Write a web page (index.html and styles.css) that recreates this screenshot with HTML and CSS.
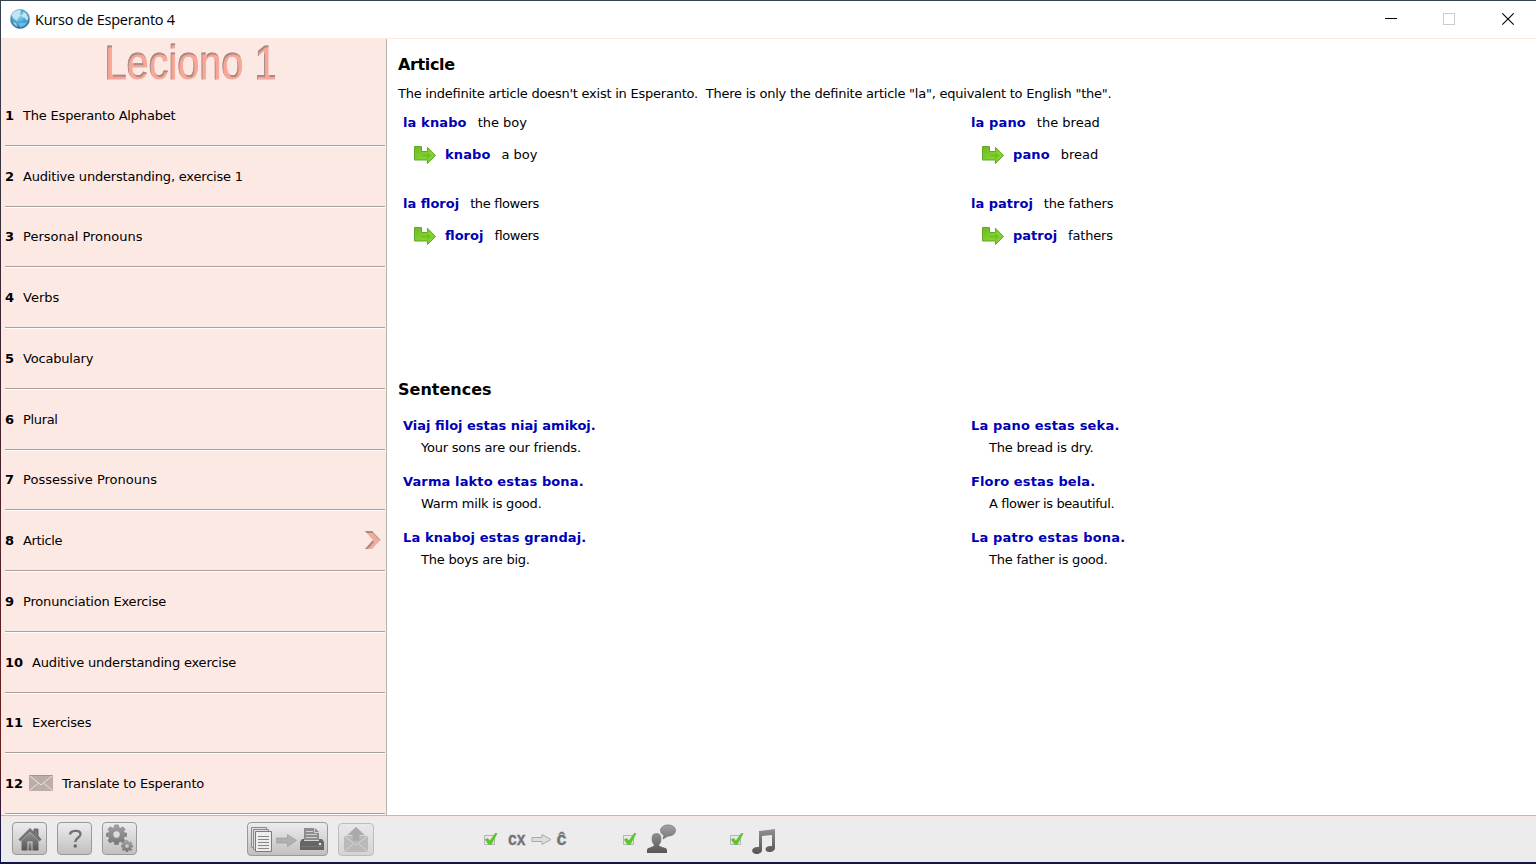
FILE: index.html
```
<!DOCTYPE html>
<html lang="en">
<head>
<meta charset="utf-8">
<title>Kurso de Esperanto 4</title>
<link rel="stylesheet" href="styles.css">
</head>
<body>
<svg class="defs" width="0" height="0">
  <defs>
    <linearGradient id="green" x1="0" y1="0" x2="1" y2="1"><stop offset="0" stop-color="#6cba22"/><stop offset=".55" stop-color="#84d230"/><stop offset="1" stop-color="#7ccb34"/></linearGradient>
    <linearGradient id="dark" x1="0" y1="0" x2="0" y2="1"><stop offset="0" stop-color="#909090"/><stop offset="1" stop-color="#555"/></linearGradient>
    <linearGradient id="mid" x1="0" y1="0" x2="0" y2="1"><stop offset="0" stop-color="#a2a2a2"/><stop offset="1" stop-color="#777"/></linearGradient>
    <radialGradient id="globe" cx=".45" cy=".35" r=".65"><stop offset="0" stop-color="#8ed5f3"/><stop offset=".6" stop-color="#43a0d2"/><stop offset="1" stop-color="#225c91"/></radialGradient>
    <filter id="inset" x="-5%" y="-5%" width="110%" height="110%">
      <feOffset in="SourceAlpha" dx=".6" dy="1.5" result="o"/>
      <feGaussianBlur in="o" stdDeviation=".6" result="b"/>
      <feComposite in="SourceAlpha" in2="b" operator="out" result="edge"/>
      <feFlood flood-color="#a08d89"/>
      <feComposite in2="edge" operator="in" result="shade"/>
      <feMerge><feMergeNode in="SourceGraphic"/><feMergeNode in="shade"/></feMerge>
    </filter>
    <symbol id="turn" viewBox="0 0 24 20">
      <path d="M1.500 1.500h7v5h6V2.300L22.500 10.500l-8 8V15h-13z" fill="url(#green)" stroke="#61a72a"/>
      <path d="M9 9.500h5V7l4 3.500-4 3.500v-2.500H9z" fill="#6cc31c"/>
    </symbol>
    <symbol id="check" viewBox="0 0 16 16">
      <path d="M1.500 4.500h10v9h-10z" fill="#e9e9e9" stroke="#b5b5b5"/>
      <path d="M1.800 8.500l3-1.500 2 2.500L12.200 2l2.300.3L8.500 13.800H5.500z" fill="#5fc42d"/>
    </symbol>
    <symbol id="gear" viewBox="-12 -12 24 24">
      <path fill-rule="evenodd" d="M-2-11h4l.6 3 2 .9 2.600-1.700 2.700 2.700-1.700 2.500.8 1.600 3 .6v3.300l-3 .6-.9 2.100 1.800 2.500-2.700 2.700-2.500-1.700-2.100.8-.6 2.900h-4l-.6-2.900-2.100-.8-2.500 1.700-2.700-2.700 1.700-2.500-.8-2.100-3-.6v-3.300l3-.6.8-1.600-1.700-2.500 2.700-2.700 2.600 1.700 2-.9zM4.200 0a4.200 4.200 0 1 0-8.400 0 4.200 4.200 0 1 0 8.400 0z" fill="url(#mid)" stroke="#777" stroke-width=".6"/>
    </symbol>
  </defs>
</svg>
<div class="window">
  <header class="titlebar">
    <svg class="app-icon" width="20" height="20" viewBox="0 0 20 20">
      <circle cx="10" cy="10" r="9.700" fill="url(#globe)" stroke="#7da1b8" stroke-width=".5"/>
      <path d="M1.500 6Q4 1 10 .8L11 3 9 5l2 1-3 3-1 3-4-3zM13 3l3 1 2.500 5-1.500 3-2-3-3-1-1-2 2-1z" fill="#cfe8f4" opacity=".9"/>
      <path d="M3 13l3 1 2 4Q4 17 3 13z" fill="#fff" opacity=".5"/>
      <path d="M8 14Q13 15 18 12Q15 18.500 10 18.500z" fill="#7fe0f8" opacity=".6"/>
    </svg>
    <h1 class="app-title">Kurso de Esperanto 4</h1>
    <svg class="win-controls" width="140" height="16" viewBox="0 0 140 16">
      <path d="M5 8.500h12" stroke="#000"/>
      <rect x="63.500" y="3.500" width="11" height="11" fill="none" stroke="#ccc"/>
      <path d="M122.300 3.300l11.400 11.400M133.700 3.300l-11.400 11.400" stroke="#000" stroke-width="1.100"/>
    </svg>
  </header>
  <main class="body">
    <nav class="sidebar">
      <svg class="lesson" width="384" height="47" viewBox="0 0 384 47">
        <text x="103.500" y="39.500" textLength="172" lengthAdjust="spacingAndGlyphs" filter="url(#inset)">Leciono 1</text>
      </svg>
      <ol class="topics">
        <li><b>1</b><span class="tight">The Esperanto Alphabet</span></li>
        <li><b>2</b><span class="tight">Auditive understanding, exercise 1</span></li>
        <li><b>3</b><span>Personal Pronouns</span></li>
        <li><b>4</b><span>Verbs</span></li>
        <li><b>5</b><span class="tight">Vocabulary</span></li>
        <li><b>6</b><span class="tighter">Plural</span></li>
        <li><b>7</b><span>Possessive Pronouns</span></li>
        <li><b>8</b><span class="tighter">Article</span>
          <svg class="current" width="16" height="18" viewBox="0 0 16 18"><path d="M0 0h7l8.500 9L7 18H0l8-9z" fill="#f3a99b" filter="url(#inset)"/></svg></li>
        <li><b>9</b><span class="tight">Pronunciation Exercise</span></li>
        <li><b>10</b><span class="tight">Auditive understanding exercise</span></li>
        <li><b>11</b><span class="tight">Exercises</span></li>
        <li><b>12</b><svg class="mail" width="24" height="16" viewBox="0 0 24 16"><rect width="24" height="16" rx="1" fill="#bcada7"/><path d="M.5.5h23" stroke="#a4948e"/><path d="M1 1l11 9L23 1M1 15l8.500-7M23 15l-8.500-7" fill="none" stroke="#eee1dc"/></svg><span class="tight">Translate to Esperanto</span></li>
      </ol>
    </nav>
    <article class="content">
      <section class="grammar">
        <h2 class="tighter">Article</h2>
        <p class="intro">The indefinite article doesn't exist in Esperanto.&nbsp; There is only the definite article "la", equivalent to English "the".</p>
        <div class="columns">
          <dl><dt class="wider">la knabo</dt><dd>the boy</dd></dl>
          <dl><dt class="wider">la pano</dt><dd>the bread</dd></dl>
          <dl class="derived"><svg width="24" height="20"><use href="#turn"/></svg><dt class="wider">knabo</dt><dd>a boy</dd></dl>
          <dl class="derived"><svg width="24" height="20"><use href="#turn"/></svg><dt class="wider">pano</dt><dd>bread</dd></dl>
          <dl><dt>la floroj</dt><dd class="tighter">the flowers</dd></dl>
          <dl><dt>la patroj</dt><dd class="tight">the fathers</dd></dl>
          <dl class="derived"><svg width="24" height="20"><use href="#turn"/></svg><dt>floroj</dt><dd class="tightest">flowers</dd></dl>
          <dl class="derived"><svg width="24" height="20"><use href="#turn"/></svg><dt>patroj</dt><dd class="tight">fathers</dd></dl>
        </div>
      </section>
      <section class="sentences">
        <h2>Sentences</h2>
        <div class="columns">
          <div class="pair"><b>Viaj filoj estas niaj amikoj.</b><p>Your sons are our friends.</p></div>
          <div class="pair"><b class="wide-text">La pano estas seka.</b><p>The bread is dry.</p></div>
          <div class="pair"><b class="wider">Varma lakto estas bona.</b><p>Warm milk is good.</p></div>
          <div class="pair"><b class="wider">Floro estas bela.</b><p class="tightest">A flower is beautiful.</p></div>
          <div class="pair"><b class="wider">La knaboj estas grandaj.</b><p>The boys are big.</p></div>
          <div class="pair"><b class="wide-text">La patro estas bona.</b><p>The father is good.</p></div>
        </div>
      </section>
    </article>
  </main>
  <footer class="toolbar">
    <div class="group buttons">
      <button class="btn" aria-label="Home"><svg width="24" height="24" viewBox="0 0 24 24">
        <path d="M1 12.500L12 1.500l4 4V2h4v7l3 3.500-1.500 1.200L12 4.500 2.500 13.700z" fill="#777" stroke="#555" stroke-width=".8"/>
        <path d="M3.500 13.500L12 5.500l8.500 8v10h-6v-9h-5v9h-6z" fill="url(#dark)"/><path d="M10.500 15.500h3v8h-3z" fill="url(#dark)"/></svg></button>
      <button class="btn" aria-label="Help"><svg width="24" height="24" viewBox="0 0 24 24">
        <path d="M7 7.500c.5-4.500 10-5 10.500-.5.400 3.500-5.300 4-5.300 8" fill="none" stroke="#707070" stroke-width="2.400"/><circle cx="12.200" cy="19" r="1.700" fill="#666"/></svg></button>
      <button class="btn" aria-label="Settings"><svg width="30" height="30" viewBox="0 0 30 30"><use href="#gear" x="1" y="0" width="21" height="21"/><use href="#gear" x="16" y="16" width="12" height="12"/></svg></button>
    </div>
    <div class="group output">
      <button class="btn wide" aria-label="Print"><svg width="76" height="28" viewBox="0 0 76 28">
        <path d="M1.500 2.500h15v20h-15z" fill="#ddd" stroke="#8a8a8a"/><path d="M3.500 4.500h15v20h-15z" fill="#ddd" stroke="#8a8a8a"/><path d="M5.500 6.500h16v20h-16z" fill="#ededed" stroke="#7c7c7c"/>
        <path d="M8 11.500h11M8 14.500h11M8 17.500h11M8 20.500h11M8 23.500h11" stroke="#888"/>
        <path d="M26.500 13h11V9.500l9 6-9 6V18h-11z" fill="#b0b0b0" stroke="#9b9b9b" stroke-width=".7"/>
        <path d="M54 3h11l4 4v8H54z" fill="#8c8c8c"/><path d="M56 6.500h7M56 9.500h11M56 12.500h11M64.500 3v4.500H69" stroke="#d0d0d0" fill="none"/>
        <path d="M52 14h2v2h15v-2h3l2 3v8H50v-8z" fill="#666"/><path d="M51 21.500h22" stroke="#777"/><circle cx="70" cy="19" r="1.300" fill="#ddd"/></svg></button>
      <button class="btn disabled" aria-label="Send"><svg width="26" height="28" viewBox="0 0 26 28">
        <path d="M1 10h24v16H1z" fill="#b9b9b9"/><path d="M1 10l12 9 12-9M1 26l9-8M25 26l-9-8" fill="none" stroke="#d4d4d4"/><path d="M13 1l8.500 8H16.500v6h-7V9H4.500z" fill="#a9a9a9" stroke="#b9b9b9" stroke-width=".5"/></svg></button>
    </div>
    <div class="group options">
      <label class="opt cx"><svg width="16" height="16"><use href="#check"/></svg>
        <svg width="62" height="28" viewBox="0 0 62 28"><text x="2" y="20" textLength="17.500" lengthAdjust="spacingAndGlyphs">cx</text><path d="M26 12.500h10v-3l9 5-9 5v-3H26z" fill="#ddd" stroke="#aaa"/><text x="50.500" y="20" textLength="10" lengthAdjust="spacingAndGlyphs">ĉ</text></svg></label>
      <label class="opt voice"><svg width="16" height="16"><use href="#check"/></svg>
        <svg width="32" height="30" viewBox="0 0 32 30"><path d="M1 29v-3c0-3 7-3 7-5-2-2-3-5-2-9 1-4 8-4 9 0 1 4 0 7-2 9 0 2 8 2 8 5v3z" fill="url(#dark)"/><path d="M22 1c10 0 10 11 0 11l-5 3 1-4c-6-2-4-10 4-10z" fill="url(#mid)" stroke="#777" stroke-width=".8"/></svg></label>
      <label class="opt music"><svg width="16" height="16"><use href="#check"/></svg>
        <svg width="26" height="26" viewBox="0 0 26 26"><path d="M8 3l16-2v19c0 2-2 4-6 4-5 0-5-7 3-6V7l-10 1v14c0 2-2 4-6 4-6-1-5-8 3-7z" fill="url(#dark)"/></svg></label>
    </div>
  </footer>
</div>
</body>
</html>
```
FILE: styles.css
```
* { box-sizing: border-box; }
body {
  margin: 0;
  width: 1536px;
  height: 864px;
  overflow: hidden;
  padding: 1px 0 2px 1px;
  background: linear-gradient(180deg, #35414f 0, #3b2430 350px, #6a1f1c 760px, #12144a 840px);
  font: 13px/20px "DejaVu Sans", sans-serif;
  color: #000;
}
h1, h2, p, ol, dl, dd { margin: 0; padding: 0; }
.defs { position: absolute; }
.window { height: 861px; display: flex; flex-direction: column; background: #fff; }
.titlebar {
  height: 38px;
  flex: none;
  display: flex;
  align-items: center;
  padding: 0 16px 1px 9px;
  border-bottom: 1px solid #fde9e4;
}
.app-title { font: 400 14.5px/20px "Open Sans", sans-serif; margin: 1px 0 0 5px; letter-spacing: -.24px; }
.win-controls { margin: -2px 0 0 auto; }
.body { flex: none; height: 776px; display: flex; }
.sidebar { width: 386px; padding-right: 1px; background: #fde9e4; border-right: 1px solid #b9b5ab; }
.lesson { display: block; overflow: visible; }
.lesson text { font-family: "Liberation Sans Narrow", "Liberation Sans", sans-serif; font-size: 48px; fill: #f8a797; stroke: #f8a797; stroke-width: 1px; }
.topics { list-style: none; padding-left: 4px; height: 729px; display: grid; grid-template-rows: repeat(12, 1fr); }
.topics li { display: flex; align-items: center; border-bottom: 1px solid #fff; box-shadow: inset 0 -1px #a9a19e; }
.topics span { margin-left: 9px; }
.topics .mail { margin: -2px 0 0 6px; }
.current { margin: -2px 4px 0 auto; }
.tight { letter-spacing: -.19px; font-feature-settings: "liga" 1; }
.tighter { letter-spacing: -.36px; font-feature-settings: "liga" 1; }
.tightest { letter-spacing: -.4px; font-feature-settings: "liga" 1; }
.wider { letter-spacing: .12px; font-feature-settings: "liga" 1; }
.wide-text { letter-spacing: .18px; }
.content { flex: 1; padding: 16px 0 0 11px; }
h2 { font-size: 16px; line-height: 20px; font-weight: 700; }
.intro { margin-top: 9px; letter-spacing: -.235px; font-feature-settings: "liga" 1; }
.columns { display: grid; grid-template-columns: 568px 1fr; padding-left: 5px; }
.grammar { height: 325px; }
.grammar .columns { margin-top: 9px; grid-template-rows: 20px 44px 54px 10px; }
.grammar dl { display: flex; align-items: center; gap: 11px; }
.derived { padding-left: 10px; }
.derived svg + dt { margin-left: -3px; }
dt, .pair b { color: #0000b4; font-weight: 700; }
.sentences .columns { margin-top: 16px; row-gap: 14px; }
.pair { height: 42px; }
.pair p { margin: 2px 0 0 18px; }
.pair p:not(.tightest) { letter-spacing: -.22px; }
.toolbar {
  flex: 1;
  display: flex;
  align-items: flex-start;
  background: #ececec;
  border-top: 1px solid #c4bab5;
  box-shadow: inset 0 1px #f6e5e1;
  padding: 6px 0 0 11px;
}
.group { display: flex; }
.buttons { gap: 10px; }
.output { margin-left: 110px; gap: 10px; }
.btn {
  width: 35px; height: 33px; padding: 0;
  display: flex; align-items: center; justify-content: center;
  border: 1px solid #999; border-radius: 4px;
  background: linear-gradient(#ececec, #c0c0c0);
}
.wide { width: 81px; height: 34px; }
.disabled { width: 36px; height: 33px; margin-top: 1px; border-color: #bbb; background: linear-gradient(#e8e8e8, #d4d4d4); }
.options { margin-left: 109px; }
.opt { display: flex; align-items: center; height: 34px; }
.opt text { font: 700 18px "Liberation Sans", sans-serif; fill: #777; stroke: #666; stroke-width: .3px; }
.cx svg + svg { margin-left: 7px; }
.voice { margin-left: 54px; }
.voice svg + svg { margin-left: 8px; }
.music { margin-left: 51px; }
.music svg + svg { margin-left: 6px; margin-top: 3px; }
```
